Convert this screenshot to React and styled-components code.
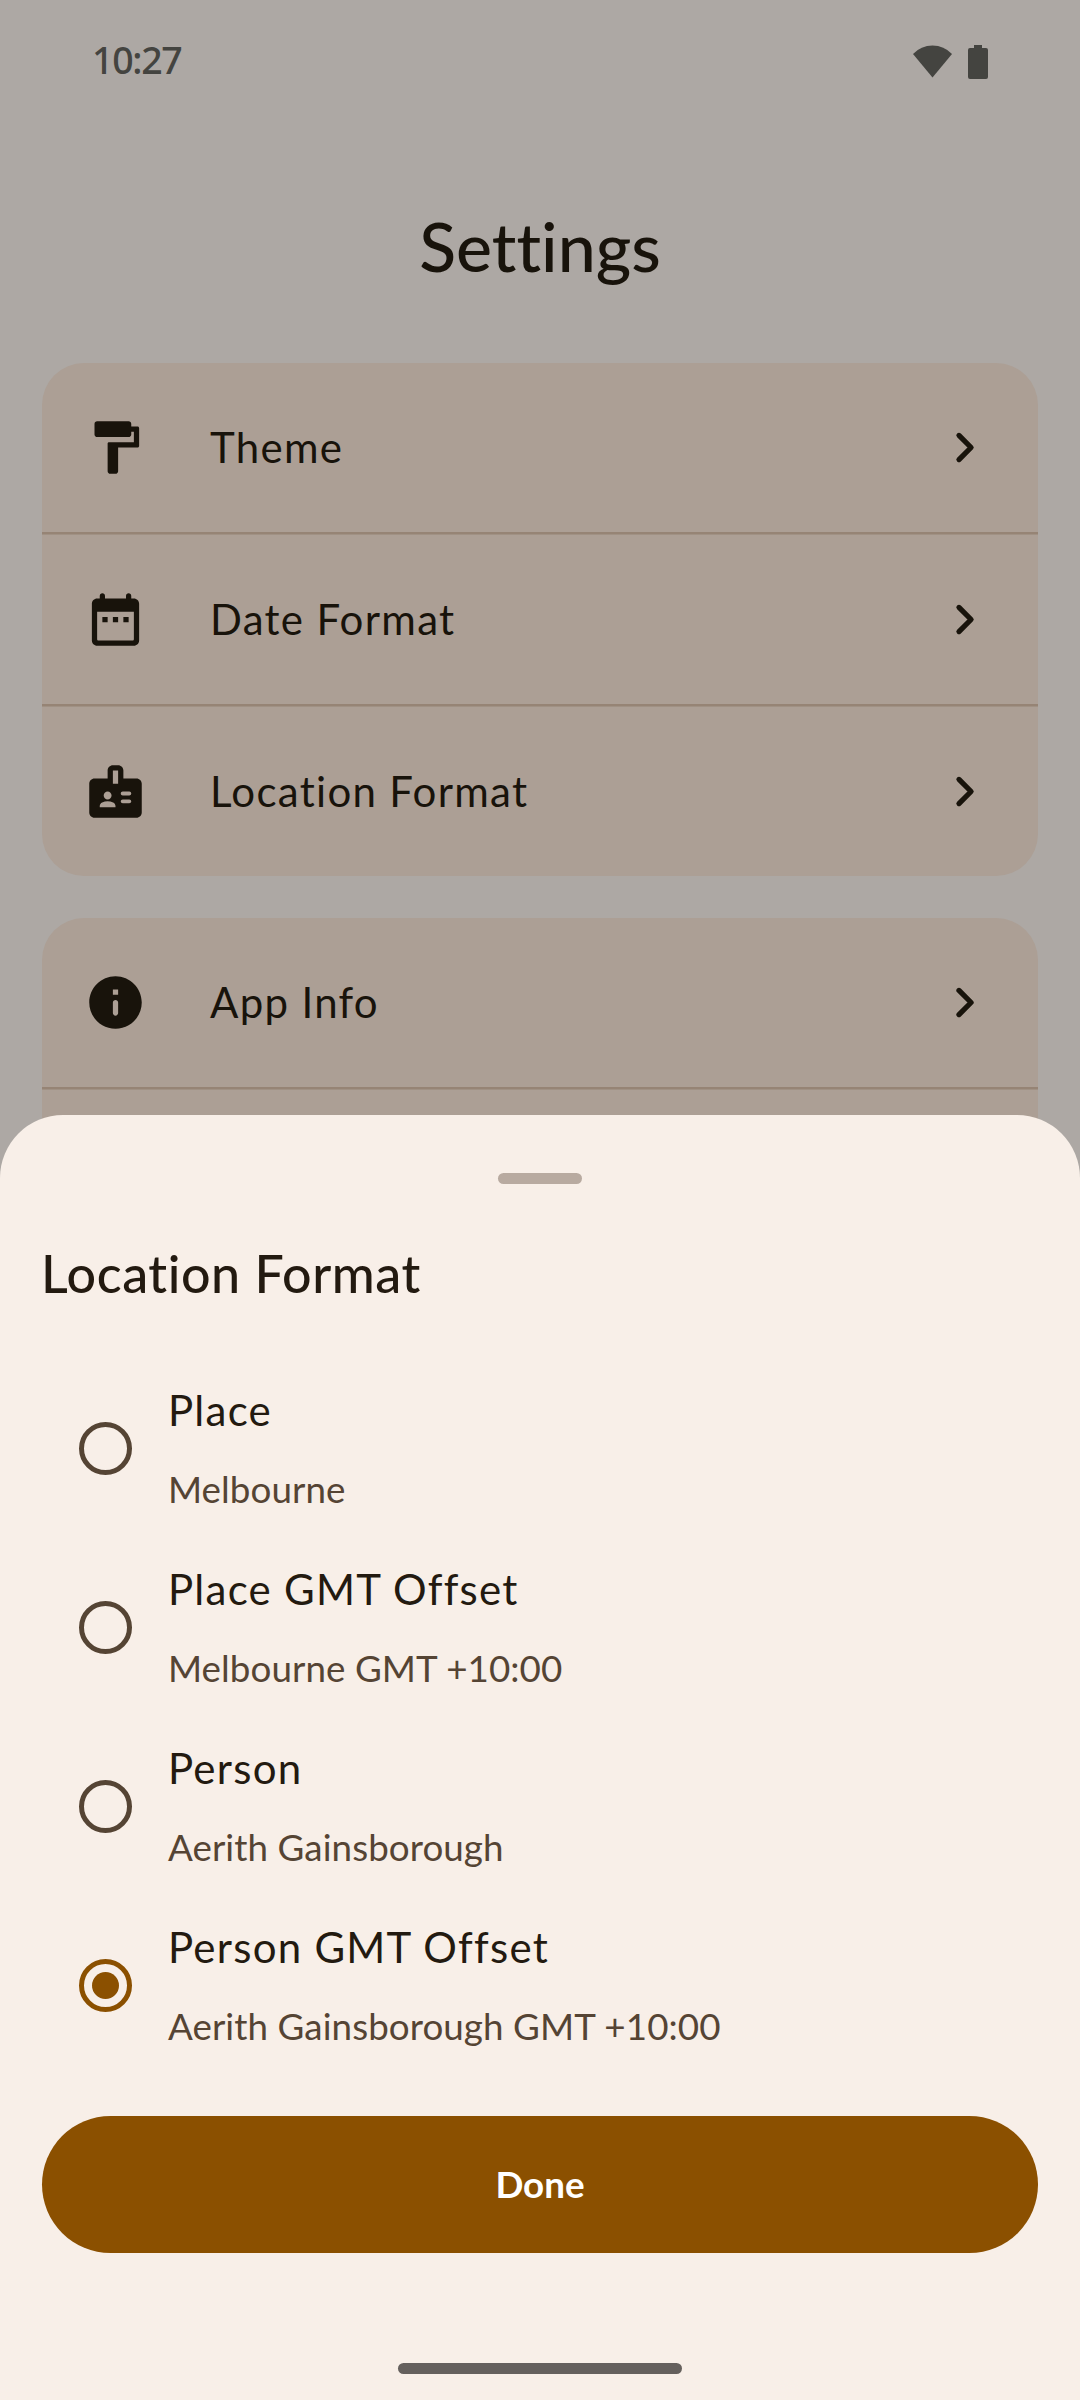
import React, { useState } from "react";
import styled, { createGlobalStyle } from "styled-components";

const GlobalStyle = createGlobalStyle`
  * { box-sizing: border-box; }
  body { margin: 0; background: #ada8a4; }
`;

const Screen = styled.div`
  position: relative;
  width: 1080px;
  height: 2400px;
  overflow: hidden;
  background: #ada8a4;
  color: #18130b;
  font-family: Lato, "Open Sans", sans-serif;
`;

const StatusBar = styled.header`
  display: flex;
  align-items: center;
  justify-content: space-between;
  height: 124px;
  padding: 0 92px;
  color: #444440;
`;

const Clock = styled.span`
  margin-top: -4px;
  font: 500 37.5px/48px "Noto Sans", sans-serif;
  letter-spacing: -1.3px;
`;

const StatusIcons = styled.svg`
  display: block;
  width: 75px;
  height: 34px;
`;

const Heading = styled.h1`
  margin: 0;
  padding-top: 74px;
  height: 239px;
  text-align: center;
  font: 500 68px/96px Lato, sans-serif;
  font-variant-ligatures: none;
`;

const Cards = styled.main`
  display: flex;
  flex-direction: column;
  gap: 42px;
  padding: 0 42px;
`;

const Card = styled.section`
  border-radius: 42px;
  overflow: hidden;
  background: #ac9f95;
`;

const SettingRow = styled.div`
  display: flex;
  align-items: center;
  height: 169px;
  padding: 0 42px;
`;

const Divider = styled.div`
  height: 3px;
  background: linear-gradient(#968475 2px, #a09184 2px);
`;

const Glyph = styled.svg`
  display: block;
  flex: none;
  width: 63px;
  height: 63px;
`;

const RowLabel = styled.span`
  flex: 1;
  margin-left: 63px;
  font-size: 42px;
  line-height: 63px;
  letter-spacing: 1.3px;
`;

const Sheet = styled.section`
  position: absolute;
  left: 0;
  right: 0;
  bottom: 0;
  display: flex;
  flex-direction: column;
  height: 1285px;
  padding: 58px 42px 26px;
  border-radius: 63px 63px 0 0;
  background: #f8efe8;
  color: #231a10;
`;

const Handle = styled.div`
  align-self: center;
  width: 84px;
  height: 11px;
  border-radius: 6px;
  background: #b8aaa0;
`;

const SheetTitle = styled.h2`
  margin: 53px 0 0 -1px;
  height: 122px;
  font-size: 52px;
  font-weight: 500;
  line-height: 72px;
  letter-spacing: 0.55px;
  font-variant-ligatures: none;
`;

const Options = styled.div`
  display: flex;
  flex-direction: column;
`;

const Option = styled.div`
  display: flex;
  align-items: center;
  height: 179px;
  padding-left: 37px;
  cursor: pointer;
`;

const Radio = styled.span`
  display: flex;
  flex: none;
  align-items: center;
  justify-content: center;
  width: 53px;
  height: 53px;
  border: 5.25px solid ${(p) => (p.$on ? "#8b5000" : "#554434")};
  border-radius: 50%;

  &::after {
    content: "";
    width: 27px;
    height: 27px;
    border-radius: 50%;
    background: ${(p) => (p.$on ? "#8b5000" : "transparent")};
  }
`;

const OptionText = styled.div`
  display: flex;
  flex-direction: column;
  gap: 20px;
  margin: -2px 0 0 36px;
`;

const OptionName = styled.span`
  font-size: 42px;
  line-height: 63px;
  letter-spacing: 1.25px;
`;

const OptionSample = styled.span`
  color: #554434;
  font-size: 36.75px;
  line-height: 54px;
  letter-spacing: 0.07px;
`;

const DoneButton = styled.button`
  flex: none;
  height: 137px;
  margin-top: 41px;
  padding: 0 0 2px;
  border: 0;
  border-radius: 69px;
  background: #8b5000;
  color: #fff;
  font: 700 36.75px/54px Lato, sans-serif;
`;

const GestureBar = styled.div`
  align-self: center;
  width: 284px;
  height: 11px;
  margin-top: auto;
  border-radius: 6px;
  background: #65605d;
`;

const ICONS = {
  paint:
    "M18 4V3c0-.55-.45-1-1-1H5c-.55 0-1 .45-1 1v4c0 .55.45 1 1 1h12c.55 0 1-.45 1-1V6h1v4h-9.5c-.28 0-.5.22-.5.5V21c0 .55.45 1 1 1h2c.55 0 1-.45 1-1v-9h7.4c.33 0 .6-.27.6-.6V4.6c0-.33-.27-.6-.6-.6H18z",
  date:
    "M7 11h2v2H7zm4 0h2v2h-2zm4 0h2v2h-2zM19 4h-1V3c0-.55-.45-1-1-1s-1 .45-1 1v1H8V3c0-.55-.45-1-1-1s-1 .45-1 1v1H5c-1.1 0-2 .9-2 2v14c0 1.1.9 2 2 2h14c1.1 0 2-.9 2-2V6c0-1.1-.9-2-2-2zm0 15.5c0 .28-.22.5-.5.5h-13c-.28 0-.5-.22-.5-.5V9h14v10.5z",
  badge:
    "M20 7h-5V4c0-1.1-.9-2-2-2h-2c-1.1 0-2 .9-2 2v3H4c-1.1 0-2 .9-2 2v11c0 1.1.9 2 2 2h16c1.1 0 2-.9 2-2V9c0-1.1-.9-2-2-2zM9 12c.83 0 1.5.67 1.5 1.5S9.83 15 9 15s-1.5-.67-1.5-1.5S8.17 12 9 12zm3 6H6v-.43c0-.6.36-1.15.92-1.39.64-.28 1.34-.43 2.08-.43s1.44.15 2.08.43c.55.24.92.78.92 1.39V18zm1-9h-2V4h2v5zm4.25 7.5h-2.5c-.41 0-.75-.34-.75-.75s.34-.75.75-.75h2.5c.41 0 .75.34.75.75s-.34.75-.75.75zm0-3h-2.5c-.41 0-.75-.34-.75-.75s.34-.75.75-.75h2.5c.41 0 .75.34.75.75s-.34.75-.75.75z",
  info:
    "M12 2C6.48 2 2 6.48 2 12s4.48 10 10 10 10-4.48 10-10S17.52 2 12 2zm0 15c-.55 0-1-.45-1-1v-4c0-.55.45-1 1-1s1 .45 1 1v4c0 .55-.45 1-1 1zm1-8h-2V7h2v2z",
};

function Setting({ icon, label }) {
  return (
    <SettingRow>
      <Glyph viewBox="0 0 24 24" fill="currentColor" fillRule="evenodd">
        <path d={ICONS[icon]} />
      </Glyph>
      <RowLabel>{label}</RowLabel>
      <Glyph viewBox="0 0 24 24" fill="none" stroke="currentColor" strokeWidth="2" strokeLinecap="round" strokeLinejoin="round">
        <path d="M9.9 7.4 14.5 12l-4.6 4.6" />
      </Glyph>
    </SettingRow>
  );
}

const OPTIONS = [
  ["Place", "Melbourne"],
  ["Place GMT Offset", "Melbourne GMT +10:00"],
  ["Person", "Aerith Gainsborough"],
  ["Person GMT Offset", "Aerith Gainsborough GMT +10:00"],
];

export default function App() {
  const [selected, setSelected] = useState(3);
  return (
    <Screen>
      <GlobalStyle />
      <StatusBar>
        <Clock>10:27</Clock>
        <StatusIcons viewBox="0 0 75 34" fill="currentColor">
          <path d="M0 9Q8 .5 19.5 .5T39 9L19.5 32.5z" />
          <path d="M61 0h8v3h4a2 2 0 0 1 2 2v27a2 2 0 0 1-2 2H57a2 2 0 0 1-2-2V5a2 2 0 0 1 2-2h4z" />
        </StatusIcons>
      </StatusBar>
      <Heading>Settings</Heading>
      <Cards>
        <Card>
          <Setting icon="paint" label="Theme" />
          <Divider />
          <Setting icon="date" label="Date Format" />
          <Divider />
          <Setting icon="badge" label="Location Format" />
        </Card>
        <Card>
          <Setting icon="info" label="App Info" />
          <Divider />
          <SettingRow />
        </Card>
      </Cards>
      <Sheet>
        <Handle />
        <SheetTitle>Location Format</SheetTitle>
        <Options>
          {OPTIONS.map(([name, sample], i) => (
            <Option key={name} onClick={() => setSelected(i)}>
              <Radio $on={selected === i} />
              <OptionText>
                <OptionName>{name}</OptionName>
                <OptionSample>{sample}</OptionSample>
              </OptionText>
            </Option>
          ))}
        </Options>
        <DoneButton>Done</DoneButton>
        <GestureBar />
      </Sheet>
    </Screen>
  );
}
